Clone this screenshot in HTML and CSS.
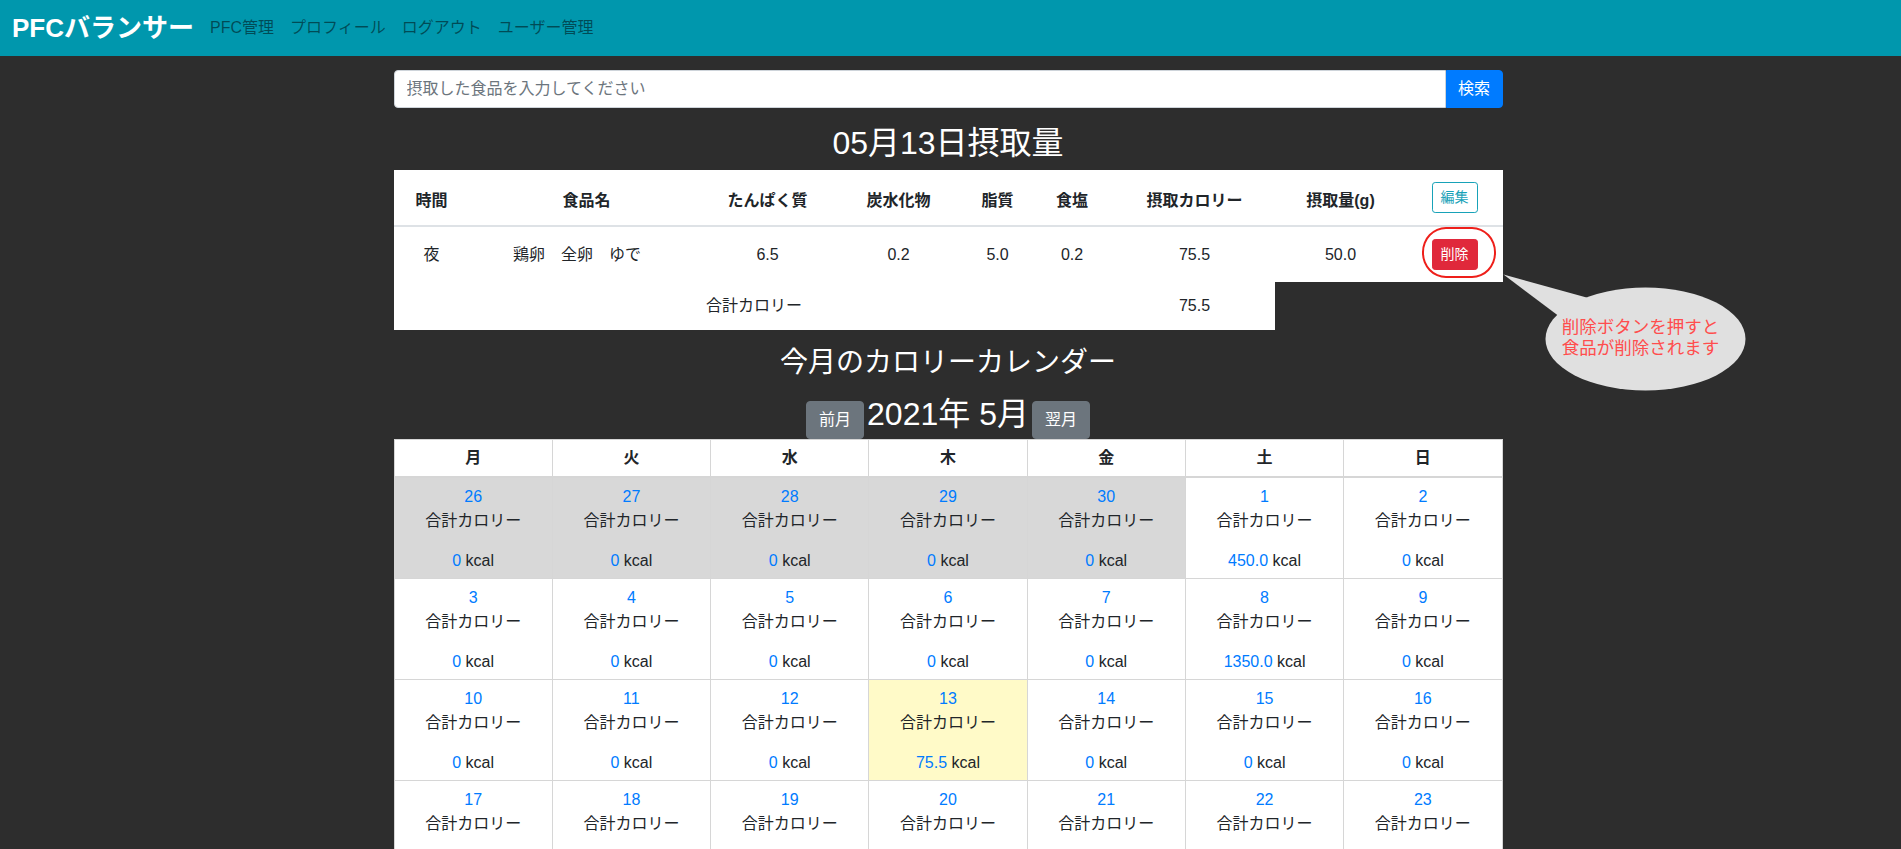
FILE: index.html
```html
<!DOCTYPE html>
<html lang="ja">
<head>
<meta charset="utf-8">
<title>PFCバランサー</title>
<link rel="stylesheet" href="styles.css">
</head>
<body>
<nav class="navbar">
  <a class="brand" href="#">PFCバランサー</a>
  <ul class="nav-links">
    <li><a class="nav-link" href="#">PFC管理</a></li>
    <li><a class="nav-link" href="#">プロフィール</a></li>
    <li><a class="nav-link" href="#">ログアウト</a></li>
    <li><a class="nav-link" href="#">ユーザー管理</a></li>
  </ul>
</nav>
<main class="container">
  <form class="search">
    <input class="search-input" type="text" placeholder="摂取した食品を入力してください">
    <button class="search-btn" type="button">検索</button>
  </form>
  <h2 class="day-title">05月13日摂取量</h2>
  <div class="intake">
    <table class="intake-table">
      <colgroup>
        <col class="c1"><col class="c2"><col class="c3"><col class="c4"><col class="c5"><col class="c6"><col class="c7"><col class="c8"><col class="c9">
      </colgroup>
      <thead>
        <tr>
          <th>時間</th><th>食品名</th><th>たんぱく質</th><th>炭水化物</th><th>脂質</th><th>食塩</th><th>摂取カロリー</th><th>摂取量(g)</th>
          <th><button class="btn-sm btn-edit" type="button">編集</button></th>
        </tr>
      </thead>
      <tbody>
        <tr>
          <td>夜</td><td class="food">鶏卵　全卵　ゆで</td><td>6.5</td><td>0.2</td><td>5.0</td><td>0.2</td><td>75.5</td><td>50.0</td>
          <td><button class="btn-sm btn-delete" type="button">削除</button></td>
        </tr>
        <tr class="total">
          <td colspan="6">合計カロリー</td><td>75.5</td>
        </tr>
      </tbody>
    </table>
    <div class="ring"></div>
    <svg class="callout" width="250" height="125" viewBox="0 0 250 125">
      <polygon points="3.5,4.6 92,29 60,47" fill="#e0e0e0"/>
      <ellipse cx="145.5" cy="69" rx="100" ry="51.5" fill="#e0e0e0"/>
    </svg>
    <p class="callout-text">削除ボタンを押すと<br>食品が削除されます</p>
  </div>

  <h3 class="cal-title">今月のカロリーカレンダー</h3>
  <div class="month-nav">
    <button class="btn-month" type="button">前月</button>
    <span class="month-label">2021年 5月</span>
    <button class="btn-month" type="button">翌月</button>
  </div>
  <table class="calendar">
    <thead>
      <tr><th>月</th><th>火</th><th>水</th><th>木</th><th>金</th><th>土</th><th>日</th></tr>
    </thead>
    <tbody>
      <tr>
        <td class="other"><div class="date">26</div><div class="label">合計カロリー</div><div><span class="num">0</span> kcal</div></td>
        <td class="other"><div class="date">27</div><div class="label">合計カロリー</div><div><span class="num">0</span> kcal</div></td>
        <td class="other"><div class="date">28</div><div class="label">合計カロリー</div><div><span class="num">0</span> kcal</div></td>
        <td class="other"><div class="date">29</div><div class="label">合計カロリー</div><div><span class="num">0</span> kcal</div></td>
        <td class="other"><div class="date">30</div><div class="label">合計カロリー</div><div><span class="num">0</span> kcal</div></td>
        <td><div class="date">1</div><div class="label">合計カロリー</div><div><span class="num">450.0</span> kcal</div></td>
        <td><div class="date">2</div><div class="label">合計カロリー</div><div><span class="num">0</span> kcal</div></td>
      </tr>
      <tr>
        <td><div class="date">3</div><div class="label">合計カロリー</div><div><span class="num">0</span> kcal</div></td>
        <td><div class="date">4</div><div class="label">合計カロリー</div><div><span class="num">0</span> kcal</div></td>
        <td><div class="date">5</div><div class="label">合計カロリー</div><div><span class="num">0</span> kcal</div></td>
        <td><div class="date">6</div><div class="label">合計カロリー</div><div><span class="num">0</span> kcal</div></td>
        <td><div class="date">7</div><div class="label">合計カロリー</div><div><span class="num">0</span> kcal</div></td>
        <td><div class="date">8</div><div class="label">合計カロリー</div><div><span class="num">1350.0</span> kcal</div></td>
        <td><div class="date">9</div><div class="label">合計カロリー</div><div><span class="num">0</span> kcal</div></td>
      </tr>
      <tr>
        <td><div class="date">10</div><div class="label">合計カロリー</div><div><span class="num">0</span> kcal</div></td>
        <td><div class="date">11</div><div class="label">合計カロリー</div><div><span class="num">0</span> kcal</div></td>
        <td><div class="date">12</div><div class="label">合計カロリー</div><div><span class="num">0</span> kcal</div></td>
        <td class="today"><div class="date">13</div><div class="label">合計カロリー</div><div><span class="num">75.5</span> kcal</div></td>
        <td><div class="date">14</div><div class="label">合計カロリー</div><div><span class="num">0</span> kcal</div></td>
        <td><div class="date">15</div><div class="label">合計カロリー</div><div><span class="num">0</span> kcal</div></td>
        <td><div class="date">16</div><div class="label">合計カロリー</div><div><span class="num">0</span> kcal</div></td>
      </tr>
      <tr>
        <td><div class="date">17</div><div class="label">合計カロリー</div><div><span class="num">0</span> kcal</div></td>
        <td><div class="date">18</div><div class="label">合計カロリー</div><div><span class="num">0</span> kcal</div></td>
        <td><div class="date">19</div><div class="label">合計カロリー</div><div><span class="num">0</span> kcal</div></td>
        <td><div class="date">20</div><div class="label">合計カロリー</div><div><span class="num">0</span> kcal</div></td>
        <td><div class="date">21</div><div class="label">合計カロリー</div><div><span class="num">0</span> kcal</div></td>
        <td><div class="date">22</div><div class="label">合計カロリー</div><div><span class="num">0</span> kcal</div></td>
        <td><div class="date">23</div><div class="label">合計カロリー</div><div><span class="num">0</span> kcal</div></td>
      </tr>
      <tr>
        <td><div class="date">24</div><div class="label">合計カロリー</div><div><span class="num">0</span> kcal</div></td>
        <td><div class="date">25</div><div class="label">合計カロリー</div><div><span class="num">0</span> kcal</div></td>
        <td><div class="date">26</div><div class="label">合計カロリー</div><div><span class="num">0</span> kcal</div></td>
        <td><div class="date">27</div><div class="label">合計カロリー</div><div><span class="num">0</span> kcal</div></td>
        <td><div class="date">28</div><div class="label">合計カロリー</div><div><span class="num">0</span> kcal</div></td>
        <td><div class="date">29</div><div class="label">合計カロリー</div><div><span class="num">0</span> kcal</div></td>
        <td><div class="date">30</div><div class="label">合計カロリー</div><div><span class="num">0</span> kcal</div></td>
      </tr>
    </tbody>
  </table>
</main>
</body>
</html>
```
FILE: styles.css
```css
body {
  margin: 0;
  background: #2d2d2d;
  font-family: "Liberation Sans", "Noto Sans CJK JP", sans-serif;
  font-size: 16px;
  line-height: 1.5;
  color: #212529;
}

/* navbar */
.navbar {
  height: 56px;
  background: #0097ad;
  display: flex;
  align-items: center;
  padding: 0 12px;
}
.brand {
  color: #fff;
  font-weight: 700;
  font-size: 26px;
  line-height: 1;
  margin-right: 8px;
  text-decoration: none;
}
.nav-links {
  display: flex;
  list-style: none;
  margin: 0;
  padding: 0;
}
.nav-link {
  display: block;
  color: rgba(0, 0, 0, 0.5);
  padding: 0 8px;
  text-decoration: none;
}

/* container */
.container {
  width: 1109px;
  margin: 14px 0 40px calc(50% - 557px);
}

/* search */
.search {
  display: flex;
  margin: 0;
}
.search-input {
  flex: 1;
  height: 38px;
  box-sizing: border-box;
  border: 1px solid #ced4da;
  border-radius: 4px 0 0 4px;
  padding: 6px 12px;
  font: inherit;
  color: #495057;
  background: #fff;
  outline: none;
}
.search-input::placeholder {
  color: #6c757d;
}
.search-btn {
  width: 57px;
  height: 38px;
  background: #007bff;
  color: #fff;
  border: 1px solid #007bff;
  border-radius: 0 4px 4px 0;
  font: inherit;
  padding: 0;
}

/* day title */
.day-title {
  color: #fff;
  font-size: 32px;
  font-weight: 400;
  line-height: 1.2;
  text-align: center;
  margin: 16px 0 8px;
}

/* intake table */
.intake {
  position: relative;
}
.intake-table {
  width: 1109px;
  border-collapse: collapse;
  table-layout: fixed;
}
.c1 { width: 76px; }
.c2 { width: 234px; }
.c3 { width: 128px; }
.c4 { width: 134px; }
.c5 { width: 64px; }
.c6 { width: 85px; }
.c7 { width: 160px; }
.c8 { width: 132px; }
.c9 { width: 96px; }
.intake-table th,
.intake-table td {
  background: #fff;
  padding: 12px;
  text-align: center;
  white-space: nowrap;
}
.intake-table th {
  vertical-align: bottom;
  border-bottom: 2px solid #dee2e6;
  font-weight: 700;
}
.intake-table td {
  vertical-align: middle;
}
.intake-table td.food {
  padding-right: 31px;
}
.btn-sm {
  font-family: inherit;
  font-size: 14px;
  line-height: 1.5;
  padding: 4px 8px;
  border-radius: 3.2px;
  border: 1px solid;
}
.btn-edit {
  color: #17a2b8;
  border-color: #17a2b8;
  background: transparent;
}
.btn-delete {
  color: #fff;
  background: #e0283b;
  border-color: #e0283b;
}

/* annotation */
.ring {
  position: absolute;
  left: 1028px;
  top: 57px;
  width: 74px;
  height: 51px;
  box-sizing: border-box;
  border: 2px solid #ee1f1a;
  border-radius: 24px / 25px;
}
.callout {
  position: absolute;
  left: 1106px;
  top: 100px;
  display: block;
}
.callout-text {
  position: absolute;
  left: 1147px;
  top: 147px;
  width: 200px;
  margin: 0;
  font-size: 17.5px;
  line-height: 21px;
  color: #ff4d4d;
  text-align: center;
  white-space: nowrap;
}

/* calendar */
.cal-title {
  color: #fff;
  font-size: 28px;
  font-weight: 400;
  line-height: 1.2;
  text-align: center;
  margin: 16px 0 15px;
}
.month-nav {
  display: flex;
  justify-content: center;
  align-items: baseline;
  gap: 3px;
}
.month-label {
  color: #fff;
  font-size: 32px;
  font-weight: 400;
  line-height: 38.4px;
}
.btn-month {
  background: #6c757d;
  color: #fff;
  border: 1px solid #6c757d;
  border-radius: 4px;
  padding: 6px 12px;
  font-family: inherit;
  font-size: 16px;
  line-height: 24px;
}
.calendar {
  width: 1109px;
  border-collapse: collapse;
  table-layout: fixed;
}
.calendar th {
  background: #fff;
  border: 1px solid #d6d6d6;
  border-bottom-width: 2px;
  padding: 6px;
  font-weight: 700;
  text-align: center;
}
.calendar td {
  background: #fff;
  border: 1px solid #d6d6d6;
  padding: 7px 5px 5px;
  text-align: center;
  vertical-align: top;
}
.calendar td.other {
  background: #d8d8d8;
}
.calendar td.today {
  background: #fffac8;
}
.date {
  color: #007bff;
}
.label {
  margin-bottom: 16px;
}
.num {
  color: #007bff;
}
```
